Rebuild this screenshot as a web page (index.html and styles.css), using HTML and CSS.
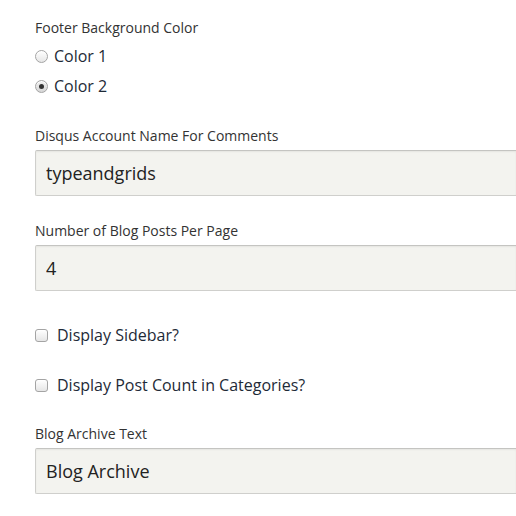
FILE: index.html
```html
<!DOCTYPE html>
<html>
<head>
<meta charset="utf-8">
<link rel="stylesheet" href="styles.css">
</head>
<body>
<form class="settings">
  <div class="field field-radios">
    <div class="label">Footer Background Color</div>
    <div class="options">
      <label class="option"><input type="radio" name="footer" class="radio"><span>Color 1</span></label>
      <label class="option"><input type="radio" name="footer" class="radio" checked><span>Color 2</span></label>
    </div>
  </div>
  <div class="field field-text">
    <div class="label">Disqus Account Name For Comments</div>
    <input class="text" type="text" value="typeandgrids">
  </div>
  <div class="field field-text">
    <div class="label">Number of Blog Posts Per Page</div>
    <input class="text" type="text" value="4">
  </div>
  <div class="field field-checks">
    <label class="option"><input type="checkbox" class="check"><span>Display Sidebar?</span></label>
    <label class="option"><input type="checkbox" class="check"><span>Display Post Count in Categories?</span></label>
  </div>
  <div class="field field-text">
    <div class="label">Blog Archive Text</div>
    <input class="text" type="text" value="Blog Archive">
  </div>
</form>
</body>
</html>
```
FILE: styles.css
```css
html, body {
  margin: 0;
  padding: 0;
  background: #ffffff;
}
body {
  font-family: "Open Sans", "Noto Sans", sans-serif;
  overflow: hidden;
}
.settings {
  padding: 18px 0 0 35px;
  display: flex;
  flex-direction: column;
}
.label {
  font-size: 14px;
  line-height: 20px;
  color: #333333;
  margin-bottom: 4px;
  white-space: nowrap;
}
.field-radios .label {
  margin-bottom: 6px;
}
.options {
  display: flex;
  flex-direction: column;
  gap: 6px;
}
.field-radios {
  margin-bottom: 28px;
}
.field-text {
  margin-bottom: 25px;
}
.field-text + .field-checks {
  margin-top: 7px;
}
.field-checks {
  display: flex;
  flex-direction: column;
  gap: 26px;
  margin-bottom: 27px;
}
.option {
  display: flex;
  align-items: center;
  font-size: 16px;
  line-height: 24px;
  color: #1e2a37;
  white-space: nowrap;
}
.radio, .check {
  -webkit-appearance: none;
  appearance: none;
  margin: 0 6px 0 0;
  width: 13px;
  height: 13px;
  flex: none;
  border: 1px solid #a4a4a4;
  background: linear-gradient(#ffffff, #e6e6e6);
  box-shadow: inset 0 1px 0 #ffffff;
  position: relative;
}
.radio {
  border-radius: 50%;
  margin-right: 6px;
}
.radio:checked {
  background: linear-gradient(#f0f0f0, #d6d6d6);
}
.radio:checked::after {
  content: "";
  position: absolute;
  left: 50%;
  top: 50%;
  width: 5px;
  height: 5px;
  margin: -2.5px 0 0 -2.5px;
  border-radius: 50%;
  background: #333333;
}
.check {
  border-radius: 3px;
  margin-right: 9px;
}
.text {
  box-sizing: border-box;
  display: block;
  width: 100%;
  height: 46px;
  margin: 0;
  padding: 0 10px;
  border: 1px solid #cfcfcc;
  border-top-color: #c4c4c1;
  border-right: none;
  border-radius: 2px 0 0 2px;
  background: #f3f3ef;
  box-shadow: inset 0 1px 2px rgba(0,0,0,0.06);
  font-family: "Open Sans", "Noto Sans", sans-serif;
  font-size: 18px;
  color: #222222;
  outline: none;
}
```
